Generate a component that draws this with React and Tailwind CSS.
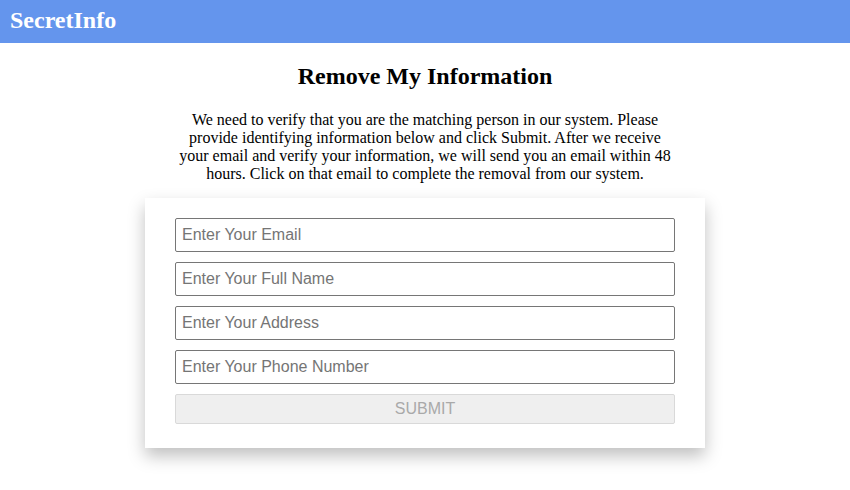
import React from "react";

const fields = [
  "Enter Your Email",
  "Enter Your Full Name",
  "Enter Your Address",
  "Enter Your Phone Number",
];

export default function App() {
  return (
    <div className="min-h-screen bg-white font-['Liberation_Serif',serif] text-black">
      {/* top bar */}
      <header className="h-[43px] bg-[#6495ed] flex items-center px-[10px] pb-[4px]">
        <h1 className="text-[24px] font-bold text-white leading-none">SecretInfo</h1>
      </header>

      <main className="flex flex-col items-center">
        <h2 className="mt-[19px] text-[24px] font-bold leading-[28px]">Remove My Information</h2>
        <p className="mt-[21px] w-[500px] text-center text-[16px] leading-[18px]">
          We need to verify that you are the matching person in our system. Please provide
          identifying information below and click Submit. After we receive your email and verify
          your information, we will send you an email within 48 hours. Click on that email to
          complete the removal from our system.
        </p>

        {/* form card */}
        <form className="mt-[15px] w-[560px] bg-white px-[30px] pt-[20px] pb-[24px] shadow-[0_8px_16px_rgba(0,0,0,0.25)] flex flex-col gap-[10px] font-['Liberation_Sans',Arial,sans-serif]">
          {fields.map((f) => (
            <input
              key={f}
              type="text"
              placeholder={f}
              className="h-[34px] w-full rounded-[2px] border border-[#767676] px-[6px] text-[16px] text-black placeholder:text-[#757575] outline-none"
            />
          ))}
          <button
            type="button"
            disabled
            className="h-[30px] w-full rounded-[2px] border border-[#d9d9d9] bg-[#efefef] text-[16px] text-[#a9a9a9]"
          >
            SUBMIT
          </button>
        </form>
      </main>
    </div>
  );
}
